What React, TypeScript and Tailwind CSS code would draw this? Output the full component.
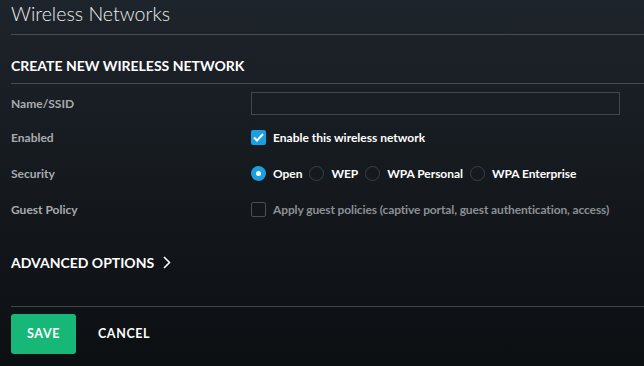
import React from 'react'

const options = ['Open', 'WEP', 'WPA Personal', 'WPA Enterprise']

function Radio({ checked }: { checked?: boolean }) {
  if (checked) {
    return (
      <span className="flex h-[15px] w-[15px] items-center justify-center rounded-full bg-[#1a9fe0]">
        <span className="h-[5px] w-[5px] rounded-full bg-white" />
      </span>
    )
  }
  return <span className="h-[15px] w-[15px] rounded-full border border-[#3a4046]" />
}

export default function App() {
  return (
    <div
      className="h-[366px] w-[644px] overflow-hidden bg-gradient-to-b from-[#1e242b] to-[#0c0f12] pl-[11px] text-white"
      style={{ fontFamily: 'Lato, "Open Sans", sans-serif' }}
    >
      <div className="h-[34px] pt-[2px]">
        <h1 className="text-[19.6px] font-light leading-[24px] text-[#ececec]">Wireless Networks</h1>
      </div>
      <div className="h-[49px] border-t border-[#464c54] pt-[22px]">
        <h2 className="text-[14px] font-bold leading-[17px]">CREATE NEW WIRELESS NETWORK</h2>
      </div>
      <div className="border-t border-[#464c54]">
        <div className="mt-[8px] flex h-[23px] items-center">
          <span className="w-[240px] text-[12px] font-bold text-[#a9acaf]">Name/SSID</span>
          <input className="h-[23px] w-[369px] border border-[#41474e] bg-transparent outline-none" />
        </div>
        <div className="mt-[15px] flex h-[15px] items-center">
          <span className="w-[240px] text-[12px] font-bold text-[#a9acaf]">Enabled</span>
          <span className="flex h-[15px] w-[15px] items-center justify-center rounded-[2px] bg-[#1a9fe0]">
            <svg width="11" height="9" viewBox="0 0 11 9" fill="none">
              <path d="M1 4.5 L4 7.5 L10 1" stroke="white" strokeWidth="2" />
            </svg>
          </span>
          <span className="ml-[7px] text-[12px] font-bold">Enable this wireless network</span>
        </div>
        <div className="mt-[21px] flex h-[15px] items-center">
          <span className="w-[240px] text-[12px] font-bold text-[#a9acaf]">Security</span>
          {options.map((o, i) => (
            <span key={o} className="mr-[7px] flex items-center">
              <Radio checked={i === 0} />
              <span className="ml-[7px] text-[12px] font-bold tracking-[-0.05px]">{o}</span>
            </span>
          ))}
        </div>
        <div className="mt-[21px] flex h-[15px] items-center">
          <span className="w-[240px] text-[12px] font-bold text-[#a9acaf]">Guest Policy</span>
          <span className="h-[15px] w-[15px] rounded-[2px] border border-[#4a4f55]" />
          <span className="ml-[7px] text-[12px] font-bold tracking-[-0.12px] text-[#8c8f93]">
            Apply guest policies (captive portal, guest authentication, access)
          </span>
        </div>
        <div className="mt-[37px] flex h-[17px] items-center gap-[9px]">
          <span className="text-[14px] font-bold">ADVANCED OPTIONS</span>
          <svg width="8" height="13" viewBox="0 0 8 13" fill="none">
            <path d="M1 1 L6.5 6.5 L1 12" stroke="white" strokeWidth="1.6" />
          </svg>
        </div>
      </div>
      <div className="mt-[35px] border-t border-[#3e4747] pt-[7px]">
        <div className="flex items-center">
          <button className="h-[40px] w-[65px] rounded-[3px] bg-[#17b877] text-[12.5px] font-bold tracking-[0.6px]">SAVE</button>
          <button className="ml-[22px] text-[12.5px] font-bold tracking-[0.6px]">CANCEL</button>
        </div>
      </div>
    </div>
  )
}
